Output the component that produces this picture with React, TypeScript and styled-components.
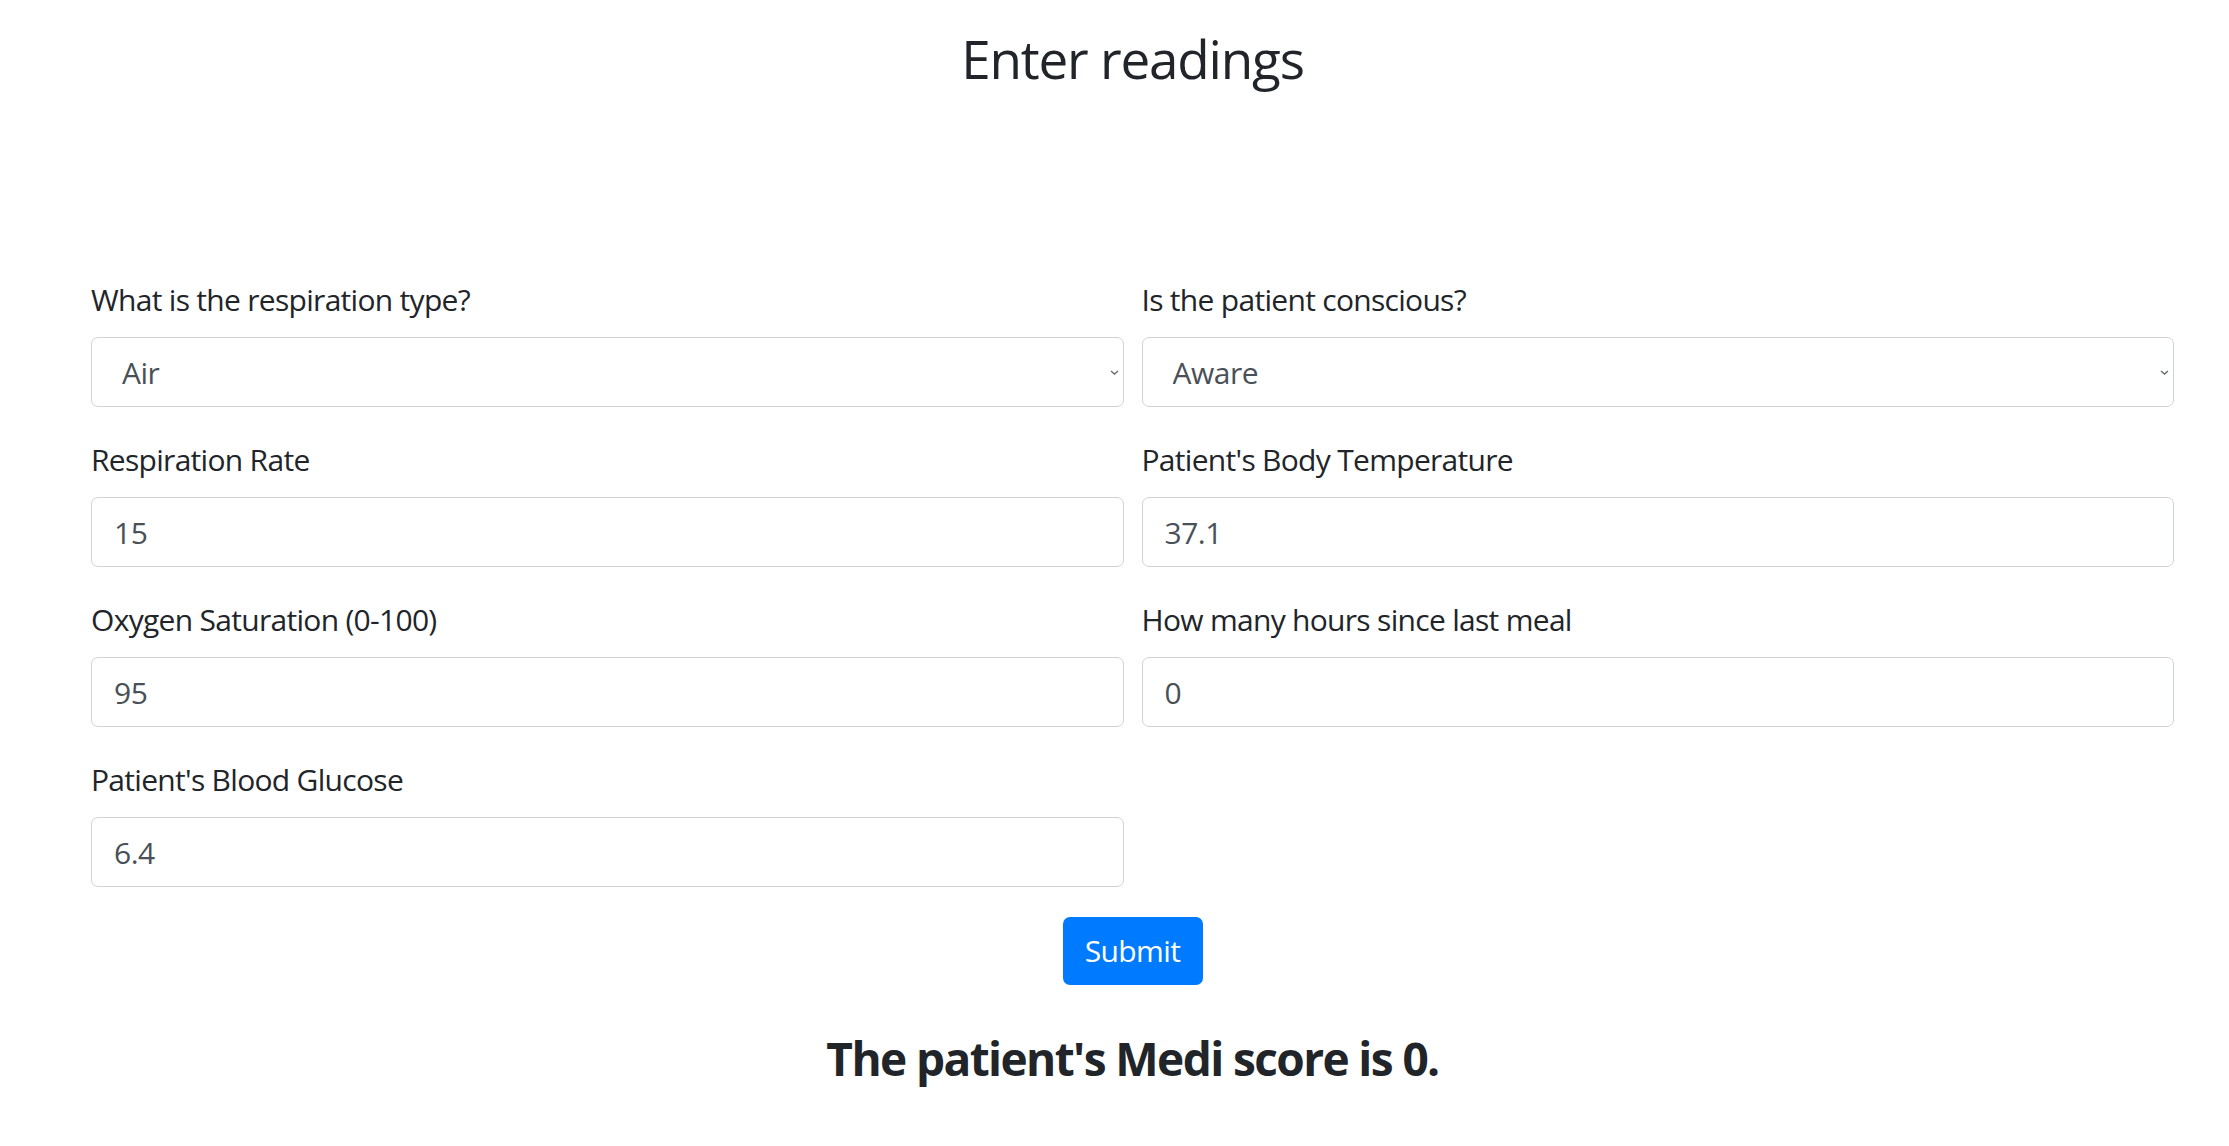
import React from "react";
import styled, { createGlobalStyle } from "styled-components";

const Global = createGlobalStyle`
  html, body { margin: 0; padding: 0; background: #ffffff; }
  body {
    font-family: "Open Sans", "Noto Sans", "Liberation Sans", sans-serif;
    color: #212529;
  }
  * { box-sizing: border-box; }
`;

const Page = styled.div`
  padding: 27px 55px 40px 91px;
`;

const Title = styled.h3`
  margin: 0 0 186px;
  font-size: 53px;
  line-height: 64px;
  font-weight: 500;
  letter-spacing: -1.2px;
  text-align: center;
  color: #212529;
`;

const Form = styled.form`
  display: flex;
  flex-direction: column;
  align-items: center;
`;

const Grid = styled.div`
  align-self: stretch;
  display: grid;
  grid-template-columns: 1fr 1fr;
  column-gap: 18px;
  row-gap: 30px;
  margin-bottom: 30px;
`;

const Group = styled.div`
  display: flex;
  flex-direction: column;
`;

const Label = styled.label`
  font-size: 30px;
  line-height: 45px;
  letter-spacing: -0.7px;
  margin-bottom: 15px;
  color: #212529;
`;

const fieldBase = `
  height: 70px;
  width: 100%;
  border: 1px solid #ced4da;
  border-radius: 7px;
  background: #fff;
  color: #495057;
  font-family: "Open Sans", "Noto Sans", "Liberation Sans", sans-serif;
  font-size: 30px;
  letter-spacing: -0.5px;
  outline: none;
`;

const Input = styled.input`
  ${fieldBase}
  padding: 0 22px;
`;

const SelectWrap = styled.div`
  position: relative;
`;

const Select = styled.select`
  ${fieldBase}
  appearance: none;
  -webkit-appearance: none;
  padding: 0 30px 0 30px;
`;

const Chevron = styled.svg`
  position: absolute;
  right: 5px;
  top: 33px;
  width: 9px;
  height: 5px;
  pointer-events: none;
`;

const Button = styled.button`
  width: 140px;
  height: 68px;
  border: none;
  border-radius: 7px;
  background: #007bff;
  color: #fff;
  font-family: "Open Sans", "Noto Sans", "Liberation Sans", sans-serif;
  font-size: 30px;
  letter-spacing: -0.6px;
  line-height: 1;
  cursor: pointer;
`;

const Result = styled.h4`
  margin: 45px 0 0;
  font-size: 46px;
  line-height: 56px;
  font-weight: 700;
  letter-spacing: -1.6px;
  text-align: center;
  color: #212529;
`;

const Arrow = () => (
  <Chevron viewBox="0 0 9 5">
    <path d="M1 1 L4.5 4 L8 1" fill="none" stroke="#6b6b6b" strokeWidth="1.4" />
  </Chevron>
);

type SelectFieldProps = { label: string; value: string; options: string[] };

const SelectField = ({ label, value, options }: SelectFieldProps) => (
  <Group>
    <Label>{label}</Label>
    <SelectWrap>
      <Select defaultValue={value}>
        {options.map((o) => (
          <option key={o}>{o}</option>
        ))}
      </Select>
      <Arrow />
    </SelectWrap>
  </Group>
);

type InputFieldProps = { label: string; value: string };

const InputField = ({ label, value }: InputFieldProps) => (
  <Group>
    <Label>{label}</Label>
    <Input type="text" defaultValue={value} />
  </Group>
);

export default function App() {
  return (
    <>
      <Global />
      <Page>
        <Title>Enter readings</Title>
        <Form onSubmit={(e) => e.preventDefault()}>
          <Grid>
            <SelectField
              label="What is the respiration type?"
              value="Air"
              options={["Air", "Oxygen"]}
            />
            <SelectField
              label="Is the patient conscious?"
              value="Aware"
              options={["Aware", "CVPU"]}
            />
            <InputField label="Respiration Rate" value="15" />
            <InputField label="Patient's Body Temperature" value="37.1" />
            <InputField label="Oxygen Saturation (0-100)" value="95" />
            <InputField label="How many hours since last meal" value="0" />
            <InputField label="Patient's Blood Glucose" value="6.4" />
          </Grid>
          <Button type="submit">Submit</Button>
        </Form>
        <Result>The patient's Medi score is 0.</Result>
      </Page>
    </>
  );
}
